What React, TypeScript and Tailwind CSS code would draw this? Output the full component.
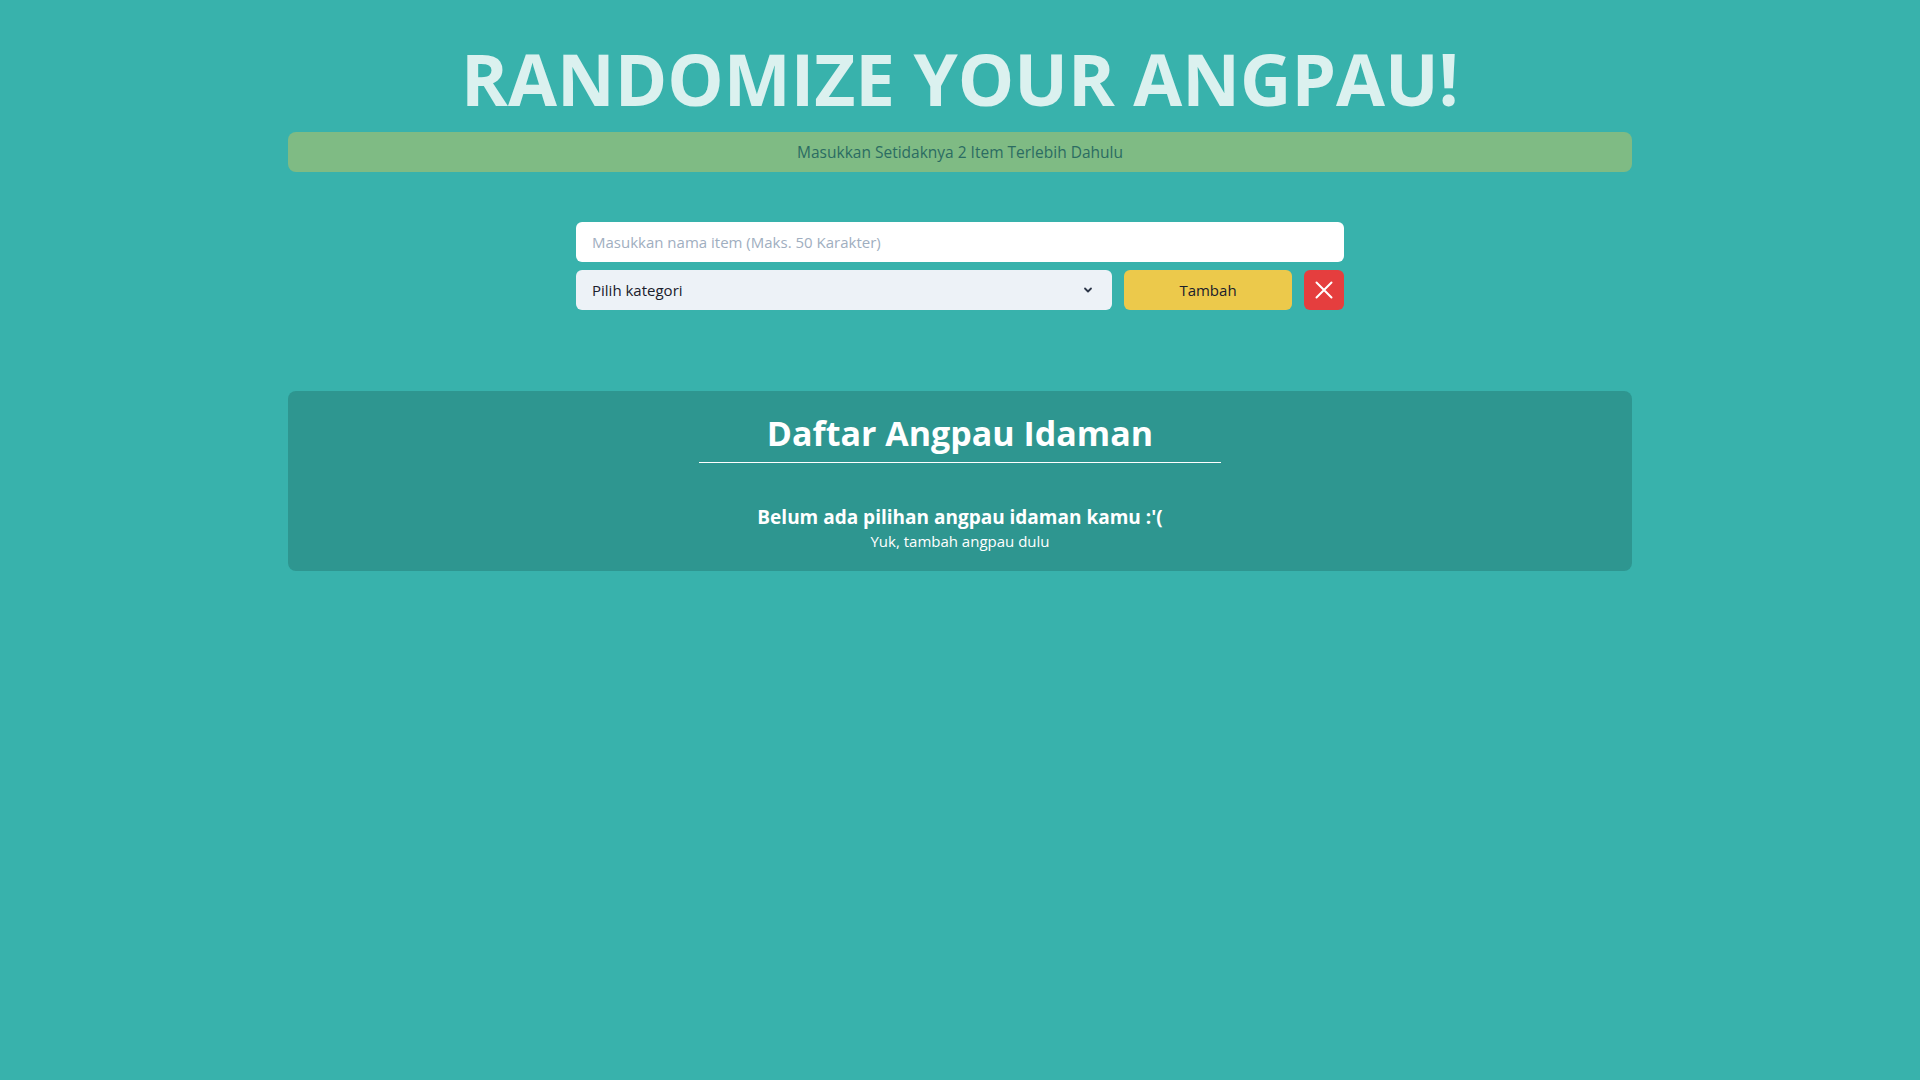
import React, { useState } from 'react'

const font = "font-['Open_Sans','Noto_Sans',sans-serif]"

const App = () => {
    const [name, setName] = useState('')
    const [category, setCategory] = useState('')

    return (
        <div className={`min-h-screen bg-[#38b2ac] ${font} pt-[43px]`}>
            <h1 className='text-center text-[71px] leading-none font-bold text-[#dbf1ef]'>RANDOMIZE YOUR ANGPAU!</h1>

            <div className='w-[70%] mx-auto mt-[18px] h-10 rounded-lg bg-[#7fbb84] flex items-center justify-center pt-px text-[#2b6c62] text-[15.5px]'>
                Masukkan Setidaknya 2 Item Terlebih Dahulu
            </div>

            <div className='w-[768px] mx-auto mt-[50px] flex flex-col gap-2'>
                <input
                    value={name}
                    onChange={(e) => setName(e.target.value)}
                    maxLength={50}
                    placeholder='Masukkan nama item (Maks. 50 Karakter)'
                    className='h-10 w-full rounded-md bg-white px-4 text-[15px] text-[#2d3748] placeholder:text-[#a0aec0] outline-none'
                />
                <div className='flex gap-3'>
                    <div className='relative flex-1'>
                        <select
                            value={category}
                            onChange={(e) => setCategory(e.target.value)}
                            className='h-10 w-full appearance-none rounded-md bg-[#edf2f7] px-4 text-[15px] font-medium text-[#1a202c] outline-none'
                        >
                            <option value=''>Pilih kategori</option>
                            <option value='uang'>Uang</option>
                            <option value='barang'>Barang</option>
                        </select>
                        <svg className='pointer-events-none absolute right-[19px] top-[15px] w-[10px] h-[10px] text-[#2d3748]' viewBox='0 0 10 10' fill='none'>
                            <path d='M2 3.5 L5 6.5 L8 3.5' stroke='currentColor' strokeWidth='1.8' strokeLinecap='round' strokeLinejoin='round' />
                        </svg>
                    </div>
                    <button className='h-10 w-[168px] rounded-md bg-[#ecc94b] text-[15px] font-medium text-[#1a202c]'>Tambah</button>
                    <button className='h-10 w-10 rounded-md bg-[#e53e3e] flex items-center justify-center'>
                        <svg width='18' height='18' viewBox='0 0 18 18' fill='none'>
                            <path d='M1.5 1.5 L16.5 16.5 M16.5 1.5 L1.5 16.5' stroke='white' strokeWidth='2' strokeLinecap='round' />
                        </svg>
                    </button>
                </div>
            </div>

            <div className='w-[70%] mx-auto mt-[81px] rounded-lg bg-[#2e9690] pt-[22px] pb-[20px] text-center text-white'>
                <div className='mx-auto w-[522px] border-b border-white pb-[9px]'>
                    <h2 className='text-[34px] leading-10 font-bold'>Daftar Angpau Idaman</h2>
                </div>
                <p className='mt-[40px] text-[19px] leading-7 font-bold'>Belum ada pilihan angpau idaman kamu :'(</p>
                <p className='text-[15px] leading-5'>Yuk, tambah angpau dulu</p>
            </div>
        </div>
    )
}

export default App
